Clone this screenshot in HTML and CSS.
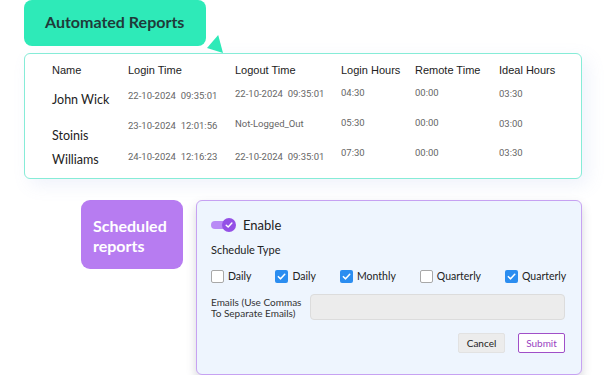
FILE: index.html
```html
<!DOCTYPE html>
<html lang="en">
<head>
    <meta charset="UTF-8">
    <meta name="viewport" content="width=device-width, initial-scale=1.0">
    <title>Reports</title>
    <link rel="stylesheet" href="styles.css">
</head>
<body>
    <div class="page">
        <!-- Automated reports -->
        <section class="auto">
            <div class="auto-badge">Automated Reports</div>
            <span class="pointer"></span>
            <div class="report-card">
                <div class="row head">
                    <div class="hd">Name</div>
                    <div class="hd">Login Time</div>
                    <div class="hd">Logout Time</div>
                    <div class="hd">Login Hours</div>
                    <div class="hd">Remote Time</div>
                    <div class="hd">Ideal Hours</div>
                </div>
                <div class="row row-1">
                    <div class="name">John Wick</div>
                    <div class="val t-in">22-10-2024&nbsp; 09:35:01</div>
                    <div class="val t-out">22-10-2024&nbsp; 09:35:01</div>
                    <div class="val">04:30</div>
                    <div class="val">00:00</div>
                    <div class="val t-ideal">03:30</div>
                </div>
                <div class="row row-2">
                    <div class="name">Stoinis</div>
                    <div class="val t-in">23-10-2024&nbsp; 12:01:56</div>
                    <div class="val t-out">Not-Logged_Out</div>
                    <div class="val">05:30</div>
                    <div class="val">00:00</div>
                    <div class="val t-ideal">03:00</div>
                </div>
                <div class="row row-3">
                    <div class="name">Williams</div>
                    <div class="val t-in">24-10-2024&nbsp; 12:16:23</div>
                    <div class="val t-out">22-10-2024&nbsp; 09:35:01</div>
                    <div class="val">07:30</div>
                    <div class="val">00:00</div>
                    <div class="val t-ideal">03:30</div>
                </div>
            </div>
        </section>

        <!-- Scheduled reports -->
        <section class="sched">
            <div class="sched-badge">Scheduled<br>reports</div>
            <div class="sched-card">
                <div class="enable-row">
                    <span class="toggle">
                        <span class="toggle-track"></span>
                        <span class="toggle-knob">
                            <svg width="8" height="8" viewBox="0 0 10 10"><path d="M1.5 5.2 L4 7.6 L8.6 2.6" fill="none" stroke="#fff" stroke-width="1.8" stroke-linecap="round" stroke-linejoin="round"/></svg>
                        </span>
                    </span>
                    <span class="enable-label">Enable</span>
                </div>
                <div class="section-label">Schedule Type</div>
                <div class="checks">
                    <label class="check"><span class="box"></span>Daily</label>
                    <label class="check"><span class="box on"><svg width="9" height="9" viewBox="0 0 10 10"><path d="M1.5 5.2 L4 7.6 L8.6 2.6" fill="none" stroke="#fff" stroke-width="1.7" stroke-linecap="round" stroke-linejoin="round"/></svg></span>Daily</label>
                    <label class="check"><span class="box on"><svg width="9" height="9" viewBox="0 0 10 10"><path d="M1.5 5.2 L4 7.6 L8.6 2.6" fill="none" stroke="#fff" stroke-width="1.7" stroke-linecap="round" stroke-linejoin="round"/></svg></span>Monthly</label>
                    <label class="check"><span class="box"></span>Quarterly</label>
                    <label class="check"><span class="box on"><svg width="9" height="9" viewBox="0 0 10 10"><path d="M1.5 5.2 L4 7.6 L8.6 2.6" fill="none" stroke="#fff" stroke-width="1.7" stroke-linecap="round" stroke-linejoin="round"/></svg></span>Quarterly</label>
                </div>
                <div class="emails-row">
                    <div class="emails-label">Emails (Use Commas<br>To Separate Emails)</div>
                    <div class="emails-input"></div>
                </div>
                <div class="actions">
                    <button type="button" class="btn-cancel">Cancel</button>
                    <button type="button" class="btn-submit">Submit</button>
                </div>
            </div>
        </section>
    </div>
</body>
</html>
```

FILE: styles.css
```css
body {
    margin: 0;
    background: #fff;
    font-family: Lato, "Noto Sans", sans-serif;
    color: #222;
}
.page {
    width: 558px;
    padding: 0 24px;
}
.auto {
    position: relative;
}
.auto-badge {
    width: 182px;
    height: 46px;
    box-sizing: border-box;
    padding-top: 12px;
    padding-left: 21px;
    background-color: #2eeab8;
    border-radius: 8px;
    font-size: 16px;
    font-weight: bold;
    color: #1f3b3a;
}
.pointer {
    position: absolute;
    left: 183px;
    top: 35px;
    width: 16px;
    height: 18px;
    background-color: #2eeab8;
    clip-path: polygon(70% 0, 0 72%, 100% 100%);
}
.report-card {
    margin-top: 7px;
    height: 126px;
    box-sizing: border-box;
    border: 1.5px solid #86ecd7;
    border-radius: 6px;
    background-color: #fff;
    box-shadow: 6px 6px 18px rgba(120, 150, 220, 0.12);
    padding: 9px 0 0 27px;
}
.row {
    display: grid;
    grid-template-columns: 76px 107px 106px 74px 84px 1fr;
    align-items: start;
}
.head {
    height: 22px;
}
.row-1 {
    height: 30px;
}
.row-2 {
    height: 29px;
}
.hd {
    font-family: "Liberation Sans", Arial, sans-serif;
    font-size: 11px;
    line-height: 14px;
    color: #222;
}
.name {
    font-size: 12.5px;
    line-height: 14px;
    color: #222;
}
.val {
    font-family: Roboto, "Liberation Sans", sans-serif;
    font-size: 9.5px;
    line-height: 14px;
    color: #666;
    white-space: nowrap;
    padding-top: 1px;
}
.val.t-in {
    padding-top: 4px;
}
.val.t-out {
    padding-top: 2px;
}
.val.t-ideal {
    padding-top: 2px;
}
.row-1 .name {
    padding-top: 8px;
}
.row-2 .name {
    padding-top: 14px;
}
.row-3 .name {
    padding-top: 9px;
}
.row-3 .val {
    padding-top: 2px;
}
.row-3 .val.t-in, .row-3 .val.t-out {
    padding-top: 6px;
}

.sched {
    display: flex;
    align-items: flex-start;
    margin-top: 21px;
}
.sched-badge {
    margin-left: 57px;
    width: 102px;
    height: 69px;
    box-sizing: border-box;
    padding: 16px 0 0 12px;
    background-color: #b77cf1;
    border-radius: 9px;
    color: #fff;
    font-size: 16px;
    font-weight: bold;
    line-height: 20px;
}
.sched-card {
    margin-left: 13px;
    width: 386px;
    height: 175px;
    box-sizing: border-box;
    background-color: #eef5fe;
    border: 1px solid #c7a2f2;
    border-radius: 6px;
    box-shadow: 0 5px 10px rgba(90, 90, 110, 0.25);
    padding: 16px 16px 0 14px;
}
.enable-row {
    display: flex;
    align-items: center;
    height: 16px;
}
.toggle {
    position: relative;
    width: 25px;
    height: 16px;
    display: inline-block;
}
.toggle-track {
    position: absolute;
    left: 0;
    top: 4px;
    width: 20px;
    height: 8px;
    border-radius: 4px;
    background-color: #b98af6;
}
.toggle-knob {
    position: absolute;
    left: 11px;
    top: 1px;
    width: 14px;
    height: 14px;
    border-radius: 50%;
    background-color: #9450e6;
    display: flex;
    align-items: center;
    justify-content: center;
}
.enable-label {
    margin-left: 7px;
    font-size: 13px;
}
.section-label {
    margin-top: 10px;
    font-size: 11px;
    line-height: 14px;
}
.checks {
    display: flex;
    gap: 24px;
    margin-top: 12px;
    font-size: 10.5px;
}
.check {
    display: flex;
    align-items: center;
    gap: 4px;
    line-height: 14px;
}
.box {
    width: 13px;
    height: 13px;
    box-sizing: border-box;
    border: 1px solid #a8a8a8;
    border-radius: 2px;
    background-color: #fff;
    display: flex;
    align-items: center;
    justify-content: center;
}
.box.on {
    border: none;
    background-color: #2b8df0;
}
.emails-row {
    display: flex;
    margin-top: 11px;
}
.emails-label {
    width: 99px;
    padding-top: 3px;
    font-size: 10px;
    line-height: 11px;
    color: #333;
}
.emails-input {
    width: 256px;
    height: 26px;
    box-sizing: border-box;
    border: 1px solid #dcdcdc;
    border-radius: 4px;
    background-color: #ececec;
}
.actions {
    display: flex;
    justify-content: flex-end;
    gap: 13px;
    margin-top: 13px;
}
.actions button {
    width: 47px;
    height: 20px;
    padding: 0;
    font-family: Lato, "Noto Sans", sans-serif;
    font-size: 10px;
    border-radius: 2px;
    cursor: pointer;
}
.btn-cancel {
    background-color: #ececec;
    border: 1px solid #e2e2e2;
    color: #222;
}
.btn-submit {
    background-color: #fff;
    border: 1.5px solid #a04fc8;
    color: #9a3fc2;
}
```
